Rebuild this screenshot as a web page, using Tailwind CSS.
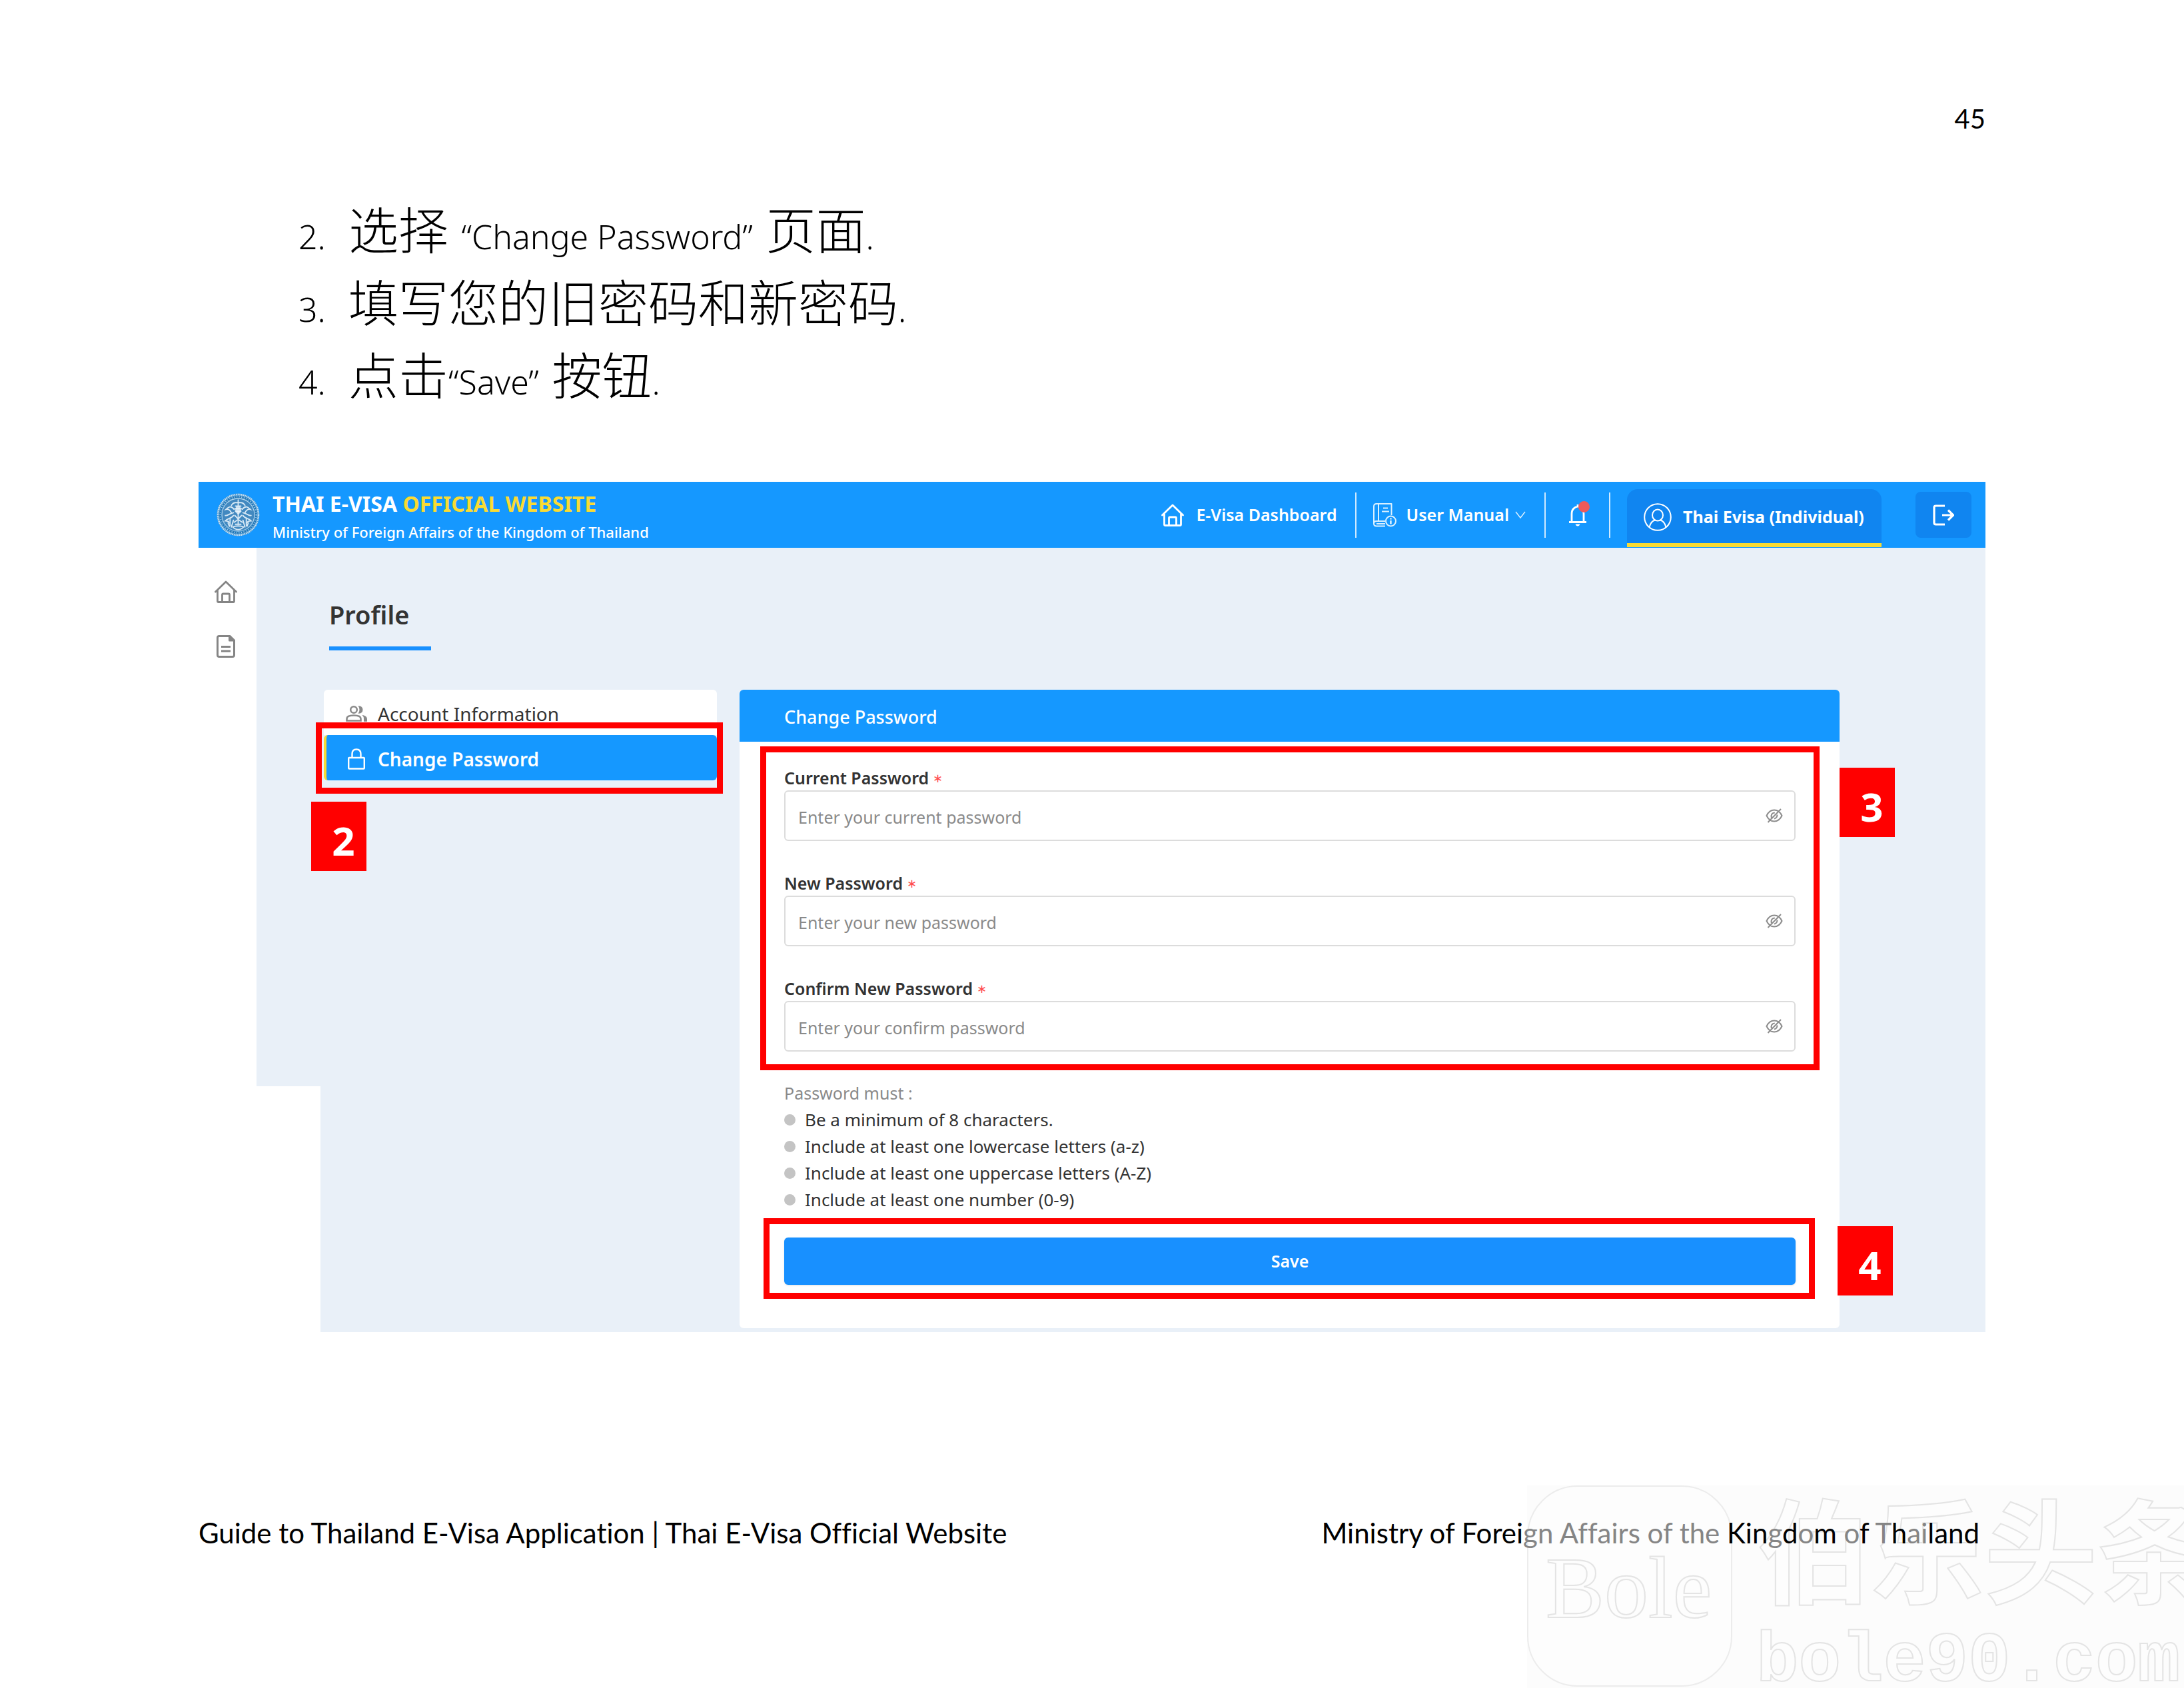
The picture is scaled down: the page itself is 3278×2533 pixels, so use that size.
<!DOCTYPE html>
<html lang="zh">
<head>
    <meta charset="UTF-8">
    <meta name="viewport" content="width=device-width, initial-scale=1.0">
    <title>Guide to Thailand E-Visa Application</title>
    <script src="https://cdn.jsdelivr.net/npm/@tailwindcss/browser@4"></script>
</head>
<body class="bg-white">

<div class="relative min-h-screen overflow-hidden px-[298px] pt-[154px] font-['Noto_Sans','Noto_Sans_CJK_SC',sans-serif] text-[#333333]">

    <!-- Watermark -->
    <div class="absolute right-0 bottom-0 w-[986px] h-[304px] bg-[#fcfcfc] overflow-hidden whitespace-nowrap text-[#fdfdfd] [-webkit-text-stroke:2px_#e4e4e4]" aria-hidden="true">
        <div class="absolute left-0 top-0 w-[308px] h-[302px] rounded-[76px] border-2 border-[#ececec] bg-[#fdfdfd]"></div>
        <div class="absolute left-[28px] top-[88px] text-[132px] leading-[132px] font-['Liberation_Serif',serif]">Bole</div>
        <div class="absolute left-[346px] top-0 text-[170px] leading-[182px] font-bold font-['Noto_Sans_CJK_SC',sans-serif]">伯乐头条</div>
        <div class="absolute left-[344px] top-[210px] text-[106px] leading-[110px] font-bold font-['Liberation_Mono',monospace]">bole90.com</div>
    </div>

    <p class="text-right font-['Lato',sans-serif] text-[40px] leading-[48px] text-black">45</p>

    <!-- Steps -->
    <ol class="mt-[99px] pl-[150px] text-[50px] leading-[109px] font-light text-black">
        <li class="flex items-baseline"><span class="w-[75px]">2.</span><span class="whitespace-pre"><span class="text-[75px] leading-none">选择 </span>“Change Password”<span class="text-[75px] leading-none"> 页面</span>.</span></li>
        <li class="flex items-baseline"><span class="w-[75px]">3.</span><span class="whitespace-pre"><span class="text-[75px] leading-none">填写您的旧密码和新密码</span>.</span></li>
        <li class="flex items-baseline"><span class="w-[75px]">4.</span><span class="whitespace-pre"><span class="text-[75px] leading-none">点击</span>“Save”<span class="text-[75px] leading-none"> 按钮</span>.</span></li>
    </ol>

    <!-- Website -->
    <section class="relative mt-[95px]">
        <header class="flex items-center h-[99px] pl-[27px] pr-[21px] bg-[#1598ff] text-white font-semibold whitespace-nowrap">
            <svg class="size-[65px] shrink-0" viewBox="0 0 64 64" fill="none">
                <circle cx="32" cy="32" r="31.5" fill="#4f9bd3"/>
                <circle cx="32" cy="32" r="30" stroke="#c3def1" stroke-width="2.5" stroke-dasharray="1.6 1"/>
                <circle cx="32" cy="32" r="26.6" stroke="#2376b5" stroke-width="2.6"/>
                <circle cx="32" cy="32" r="26.6" stroke="#9cc8e6" stroke-width="2" stroke-dasharray="1.2 2.4"/>
                <circle cx="32" cy="32" r="24" fill="#4289c0" stroke="#b5d6ec" stroke-width="1"/>
                <g stroke="#d6e8f5" stroke-width="1.8" stroke-linecap="round">
                    <path d="M32 10v8M29 14h6M28 19h8M27 23h10M29 27h6M32 28v18"/>
                    <path d="M26 24c-5-6-8-4-12 0c4-1 6 1 8 5M38 24c5-6 8-4 12 0c-4-1-6 1-8 5"/>
                    <path d="M22 18c2-3 4-4 6-4M42 18c-2-3-4-4-6-4M25 29c-6 1-9 5-12 4M39 29c6 1 9 5 12 4"/>
                    <path d="M25 33c-3 5-9 4-12 8c3 0 5 0 6 3M39 33c3 5 9 4 12 8c-3 0-5 0-6 3"/>
                    <path d="M20 38v10M17 44l2 5M44 38v10M47 44l-2 5M25 40l-3 10M39 40l3 10"/>
                    <path d="M27 33l5 5l5-5M26 43l6-4l6 4M24 50c4 5 12 5 16 0c-4-2-12-2-16 0M28 46h8"/>
                </g>
                <path d="M29 19h6l2 8l-5 5l-5-5z" fill="#eaf4fb" opacity=".8"/>
            </svg>
            <div class="ml-[19px] pt-[6px]">
                <p class="text-[32px] leading-[36px] font-bold">THAI E-VISA <span class="text-[#fadb32]">OFFICIAL WEBSITE</span></p>
                <p class="mt-[9px] text-[22px] leading-[30px] font-medium">Ministry of Foreign Affairs of the Kingdom of Thailand</p>
            </div>

            <nav class="ml-auto flex items-center h-full text-[25px]">
                <a href="#" class="flex items-center gap-[18px]">
                    <svg class="size-[34px]" viewBox="0 0 34 34" fill="none" stroke="currentColor" stroke-width="2.8" stroke-linejoin="round" stroke-linecap="round">
                        <path d="M1.5 17L17 2l15.500 15M4.500 15v16.500q0 1 1 1h23q1 0 1-1V15M11.500 32V21.500q0-1.500 1.500-1.500h8q1.500 0 1.500 1.500V32"/>
                    </svg>
                    E-Visa Dashboard
                </a>
                <span class="ml-[27px] mr-[25px] w-[2px] h-[68px] bg-white/80"></span>
                <a href="#" class="flex items-center">
                    <svg class="w-[35px] h-[36px]" viewBox="0 0 35 36" fill="none" stroke="#d9efff" stroke-width="2" stroke-linejoin="round">
                        <path d="M18 34.500H5q-4 0-4-4V5q0-4 4-4h22.500v17M1 30.500q0-3.500 4-3.500h13M8 1v26M5 31h13"/>
                        <path d="M15 7.500h7M13 12.500h11"/>
                        <circle cx="26.500" cy="27" r="7.500"/>
                        <path d="M26.500 26v5.500M26.500 22.500v2" stroke="#fff" stroke-width="2.2"/>
                    </svg>
                    <span class="ml-[15px]">User Manual</span>
                    <svg class="ml-[9px] w-[16px] h-[12px]" viewBox="0 0 16 12" fill="none" stroke="#d9efff" stroke-width="1.500"><path d="M1 1l7 9l7-9"/></svg>
                </a>
                <span class="ml-[28px] mr-[34px] w-[2px] h-[68px] bg-white/80"></span>
                <button type="button" class="relative" aria-label="Notifications">
                    <svg class="w-[28px] h-[34px]" viewBox="0 0 28 34" fill="none" stroke="currentColor" stroke-width="2.8" stroke-linejoin="round">
                        <path d="M1 27.500h26M5 27V15q0-9 9-11q9 2 9 11v12M14 1v3"/>
                        <path d="M10.500 30.500h7q-1 3-3.500 3t-3.500-3z" fill="currentColor" stroke="none"/>
                    </svg>
                    <span class="absolute left-[15px] -top-[4px] size-[17px] rounded-full bg-[#ee5a5a]"></span>
                </button>
                <span class="ml-[33px] mr-[25px] w-[2px] h-[68px] bg-white/80"></span>
                <a href="#" class="mt-[10px] flex items-center gap-[17px] w-[382px] h-[87px] pl-[25px] pt-[2px] rounded-t-[16px] border-b-[6px] border-[#fadb32] bg-[#1085f0]">
                    <svg class="size-[42px]" viewBox="0 0 42 42" fill="none" stroke="currentColor" stroke-width="2">
                        <circle cx="21" cy="21" r="19.800"/>
                        <ellipse cx="21" cy="18" rx="8" ry="8.500"/>
                        <path d="M8.500 36q2.500-9.500 9-10.500M33.500 36q-2.500-9.500-9-10.500"/>
                    </svg>
                    <span class="text-[25px] font-bold">Thai Evisa (Individual)</span>
                </a>
                <button type="button" class="ml-[51px] flex items-center justify-center w-[84px] h-[69px] rounded-[8px] bg-[#1085f0]" aria-label="Log out">
                    <svg class="w-[32px] h-[32px]" viewBox="0 0 32 32" fill="none" stroke="currentColor" stroke-width="3.200" stroke-linejoin="round">
                        <path d="M18 2H4.500Q2 2 2 4.500v23Q2 30 4.500 30H18M14 16h16M23 8.500l7.500 7.500l-7.500 7.500"/>
                    </svg>
                </button>
            </nav>
        </header>

        <div class="flex">
            <aside class="w-[87px] shrink-0 pt-[49px] pl-[24px] text-[#858585]">
                <nav class="flex flex-col gap-[48px]">
                    <a href="#" aria-label="Home">
                        <svg class="size-[34px]" viewBox="0 0 34 34" fill="none" stroke="currentColor" stroke-width="2.800" stroke-linejoin="round" stroke-linecap="round">
                            <path d="M1.500 17L17 2l15.500 15M4.500 15v16.500q0 1 1 1h23q1 0 1-1V15M11.500 32V21.500q0-1.500 1.500-1.500h8q1.500 0 1.500 1.500V32"/>
                        </svg>
                    </a>
                    <a href="#" aria-label="Applications">
                        <svg class="size-[34px]" viewBox="0 0 34 34" fill="none" stroke="currentColor" stroke-width="3" stroke-linejoin="round">
                            <path d="M23 1.500H7Q4.500 1.500 4.500 4v26q0 2.500 2.500 2.500h20q2.500 0 2.500-2.500V8z"/>
                            <path d="M22.500 1.500V8h7z" fill="currentColor"/>
                            <path d="M10 17.500h14M10 24h14"/>
                        </svg>
                    </a>
                </nav>
            </aside>

            <main class="flex-1 pt-[76px] pl-[101px] pr-[219px] pb-[6px] bg-[#e9f0f8]">
                <h1 class="ml-[8px] text-[38px] leading-[48px] font-semibold">Profile</h1>
                <div class="ml-[8px] mt-[24px] w-[153px] h-[6px] bg-[#1890ff]"></div>

                <div class="mt-[59px] grid grid-cols-[590fr_1651fr] gap-x-[34px] items-start">
                    <div class="relative">
                        <ul class="text-[28px]">
                            <li>
                                <a href="#" class="flex items-center gap-[16px] h-[68px] pl-[33px] pt-1 rounded-t-[6px] bg-white">
                                    <svg class="w-[32px] h-[26px]" viewBox="0 0 32 26" fill="none" stroke="#8a8a8a" stroke-width="2.600">
                                        <circle cx="12" cy="7" r="4.800"/>
                                        <path d="M1.500 23.500v-3q0-5 10.500-5t10.500 5v3z"/>
                                        <path d="M18.500 1.200q7 0 7 5.800t-7 5.800q2-2.500 2-5.800t-2-5.800zM24.500 14.800q7.500 1.500 7.500 6v4h-5v-4q0-3.500-2.500-6z" fill="#8a8a8a" stroke="none"/>
                                    </svg>
                                    Account Information
                                </a>
                            </li>
                            <li class="relative">
                                <a href="#" class="flex items-center gap-[16px] h-[68px] pl-[29px] pt-1 rounded-[6px] border-l-4 border-[#fadb32] bg-[#1598ff] font-semibold text-white">
                                    <svg class="w-[32px] h-[32px]" viewBox="0 0 32 32" fill="none" stroke="currentColor" stroke-width="2.400" stroke-linejoin="round">
                                        <rect x="4.200" y="14" width="23.600" height="16.500" rx="1"/>
                                        <path d="M9.500 14V8.500q0-7 6.500-7t6.500 7V14"/>
                                    </svg>
                                    Change Password
                                </a>
                                <div class="absolute -left-[12px] -right-[9px] -top-[19px] -bottom-[20px] border-9 border-[#ff0000] pointer-events-none"></div>
                            </li>
                        </ul>
                        <div class="absolute -left-[19px] top-[168px] flex items-center justify-center w-[83px] h-[104px] pl-[14px] pt-[12px] bg-[#ff0000] text-white text-[60px] font-bold">2</div>
                    </div>

                    <form class="rounded-[6px] bg-white">
                        <h2 class="flex items-center h-[78px] px-[67px] pt-1 rounded-t-[6px] bg-[#1598ff] text-white text-[27px] font-medium">Change Password</h2>
                        <div class="pt-[35px] pl-[67px] pr-[66px] pb-[65px] text-[25px]">
                            <div class="relative flex flex-col gap-[44px]">
                                <div>
                                    <label for="current" class="flex items-center gap-[6px] leading-[38px] font-semibold">Current Password <span class="text-[18px] font-normal text-[#ff4d4f]">∗</span></label>
                                    <div class="relative">
                                        <input id="current" type="password" placeholder="Enter your current password" class="block w-full h-[76px] pl-[19px] pr-[60px] pt-1 rounded-[6px] border-2 border-[#dcdcdc] bg-white placeholder:text-[#8a8a8a]">
                                        <button type="button" class="absolute right-[19px] top-[27px]" aria-label="Show current password">
                                            <svg class="w-[26px] h-[22px]" viewBox="0 0 26 22" fill="none" stroke="#8c8c8c" stroke-width="2"><path d="M1.500 11q4-8.500 11.500-8.500T24.500 11q-4 8.500-11.500 8.500T1.500 11zM23 1L3.500 21M8.800 14q-1.300-7 5-7.500M17.500 9.500q0 5-4.500 6"/></svg>
                                        </button>
                                    </div>
                                </div>
                                <div>
                                    <label for="new" class="flex items-center gap-[6px] leading-[38px] font-semibold">New Password <span class="text-[18px] font-normal text-[#ff4d4f]">∗</span></label>
                                    <div class="relative">
                                        <input id="new" type="password" placeholder="Enter your new password" class="block w-full h-[76px] pl-[19px] pr-[60px] pt-1 rounded-[6px] border-2 border-[#dcdcdc] bg-white placeholder:text-[#8a8a8a]">
                                        <button type="button" class="absolute right-[19px] top-[27px]" aria-label="Show new password">
                                            <svg class="w-[26px] h-[22px]" viewBox="0 0 26 22" fill="none" stroke="#8c8c8c" stroke-width="2"><path d="M1.500 11q4-8.500 11.500-8.500T24.500 11q-4 8.500-11.500 8.500T1.500 11zM23 1L3.500 21M8.800 14q-1.300-7 5-7.500M17.500 9.500q0 5-4.500 6"/></svg>
                                        </button>
                                    </div>
                                </div>
                                <div>
                                    <label for="confirm" class="flex items-center gap-[6px] leading-[38px] font-semibold">Confirm New Password <span class="text-[18px] font-normal text-[#ff4d4f]">∗</span></label>
                                    <div class="relative">
                                        <input id="confirm" type="password" placeholder="Enter your confirm password" class="block w-full h-[76px] pl-[19px] pr-[60px] pt-1 rounded-[6px] border-2 border-[#dcdcdc] bg-white placeholder:text-[#8a8a8a]">
                                        <button type="button" class="absolute right-[19px] top-[27px]" aria-label="Show confirmed password">
                                            <svg class="w-[26px] h-[22px]" viewBox="0 0 26 22" fill="none" stroke="#8c8c8c" stroke-width="2"><path d="M1.500 11q4-8.500 11.500-8.500T24.500 11q-4 8.500-11.500 8.500T1.500 11zM23 1L3.500 21M8.800 14q-1.300-7 5-7.500M17.500 9.500q0 5-4.500 6"/></svg>
                                        </button>
                                    </div>
                                </div>
                                <div class="absolute -left-[36px] -right-[36px] -top-[28px] -bottom-[28px] border-9 border-[#ff0000] pointer-events-none"></div>
                                <div class="absolute -right-[149px] top-[4px] flex items-center justify-center w-[83px] h-[104px] pl-[14px] pt-[12px] bg-[#ff0000] text-white text-[60px] font-bold">3</div>
                            </div>

                            <p class="mt-[42px] leading-[40px] text-[#8a8a8a]">Password must :</p>
                            <ul class="text-[26px] leading-[40px]">
                                <li class="flex items-center gap-[14px]"><span class="size-[17px] rounded-full bg-[#c4c4c4]"></span>Be a minimum of 8 characters.</li>
                                <li class="flex items-center gap-[14px]"><span class="size-[17px] rounded-full bg-[#c4c4c4]"></span>Include at least one lowercase letters (a-z)</li>
                                <li class="flex items-center gap-[14px]"><span class="size-[17px] rounded-full bg-[#c4c4c4]"></span>Include at least one uppercase letters (A-Z)</li>
                                <li class="flex items-center gap-[14px]"><span class="size-[17px] rounded-full bg-[#c4c4c4]"></span>Include at least one number (0-9)</li>
                            </ul>

                            <div class="relative mt-[37px]">
                                <button type="submit" class="block w-full h-[71px] rounded-[6px] bg-[#1890ff] text-white font-semibold shadow-sm">Save</button>
                                <div class="absolute -left-[31px] -right-[29px] -top-[29px] -bottom-[21px] border-9 border-[#ff0000] pointer-events-none"></div>
                                <div class="absolute -right-[146px] -top-[17px] flex items-center justify-center w-[83px] h-[104px] pl-[14px] pt-[12px] bg-[#ff0000] text-white text-[60px] font-bold">4</div>
                            </div>
                        </div>
                    </form>
                </div>
            </main>
        </div>

        <!-- Cut-out corner -->
        <div class="absolute left-0 bottom-0 w-[183px] h-[369px] bg-white"></div>
    </section>

    <footer class="relative mt-[275px] pr-[9px] flex justify-between font-['Lato',sans-serif] text-[42px] leading-[52px] text-black whitespace-nowrap [font-variant-ligatures:none]">
        <p>Guide to Thailand E-Visa Application | Thai E-Visa Official Website</p>
        <p>Ministry of Forei<span class="text-[#858585]">gn Affairs of the</span> Kin<span class="text-[#858585]">g</span>d<span class="text-[#858585]">o</span>m <span class="text-[#858585]">o</span>f <span class="text-[#858585]">T</span>h<span class="text-[#858585]">ai</span>land</p>
    </footer>
</div>

</body>
</html>
